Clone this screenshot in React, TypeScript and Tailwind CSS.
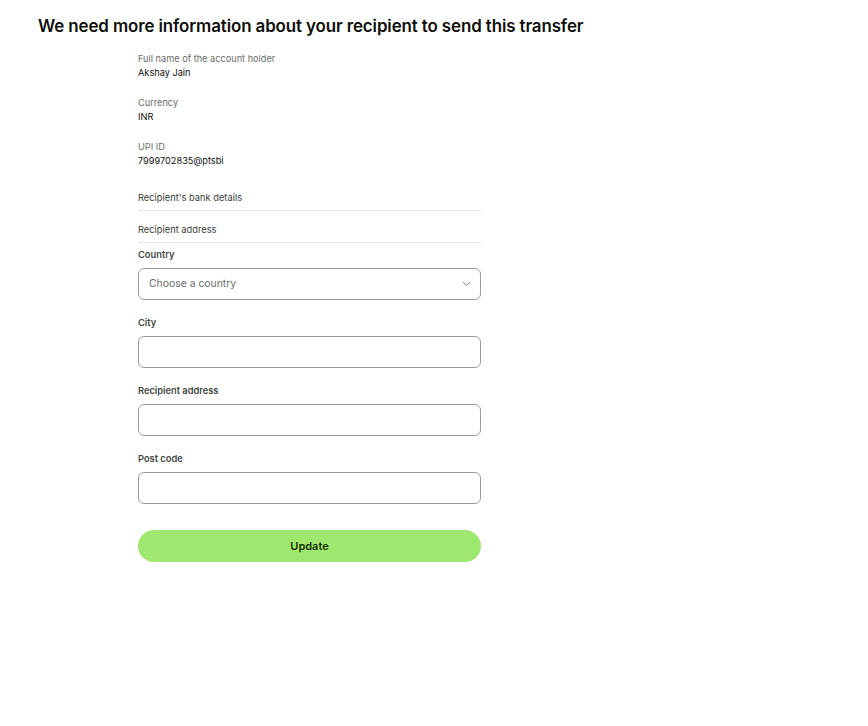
import { useState } from "react";

const Field = ({ label, value }: { label: string; value: string }) => (
    <div className="mb-[16px]">
        <p className="text-[9.2px] leading-[14px] text-[#6a6c6a]">{label}</p>
        <p className="text-[9.2px] leading-[14px] text-[#0e0f0c]">{value}</p>
    </div>
);

const Input = ({ label, value, onChange }: { label: string; value: string; onChange: (v: string) => void }) => (
    <div className="mb-[15px]">
        <label className="block text-[9.3px] leading-[15px] font-semibold text-[#454745] mb-[6px]">{label}</label>
        <input
            type="text"
            className="block w-full h-[32px] rounded-[6px] border border-[#9a9a9a] px-[10px] text-[10.4px] text-[#0e0f0c] outline-none"
            value={value}
            onChange={(e) => onChange(e.target.value)}
        />
    </div>
);

const App = () => {
    const [country, setCountry] = useState("");
    const [city, setCity] = useState("");
    const [address, setAddress] = useState("");
    const [postCode, setPostCode] = useState("");

    return (
        <div className="min-h-[726px] bg-white px-[38px] pt-[14px] font-['Inter',sans-serif]">
            <h1 className="text-[16.9px] leading-[24px] font-semibold text-[#0e0f0c] tracking-[-0.1px]">
                We need more information about your recipient to send this transfer
            </h1>

            <div className="ml-[100px] w-[343px] mt-[14px]">
                <Field label="Full name of the account holder" value="Akshay Jain" />
                <Field label="Currency" value="INR" />
                <Field label="UPI ID" value="7999702835@ptsbi" />

                <div className="mt-[23px] pb-[5px] border-b border-[#e5e6e4]">
                    <p className="text-[9.3px] leading-[14px] text-[#3a3c3a]">Recipient's bank details</p>
                </div>
                <div className="pt-[12px] pb-[5px] border-b border-[#e5e6e4]">
                    <p className="text-[9.3px] leading-[14px] text-[#3a3c3a]">Recipient address</p>
                </div>

                <div className="mt-[4px] mb-[15px]">
                    <label className="block text-[9.3px] leading-[15px] font-semibold text-[#454745] mb-[6px]">Country</label>
                    <div className="relative">
                        <select
                            className="block w-full h-[32px] appearance-none rounded-[6px] border border-[#9a9a9a] bg-white pl-[10px] pr-[28px] text-[10.4px] text-[#6a6c6a] outline-none"
                            value={country}
                            onChange={(e) => setCountry(e.target.value)}
                        >
                            <option value="">Choose a country</option>
                            <option value="IN">India</option>
                        </select>
                        <svg className="pointer-events-none absolute right-[10px] top-[13px]" width="9" height="6" viewBox="0 0 9 6" fill="none">
                            <path d="M1 1l3.5 3.5L8 1" stroke="#8a8c8a" strokeWidth="1" />
                        </svg>
                    </div>
                </div>

                <Input label="City" value={city} onChange={setCity} />
                <Input label="Recipient address" value={address} onChange={setAddress} />
                <Input label="Post code" value={postCode} onChange={setPostCode} />

                <button className="mt-[11px] w-full h-[32px] rounded-full bg-[#9fe870] text-[11px] font-semibold text-[#163300]">
                    Update
                </button>
            </div>
        </div>
    );
};

export default App;
